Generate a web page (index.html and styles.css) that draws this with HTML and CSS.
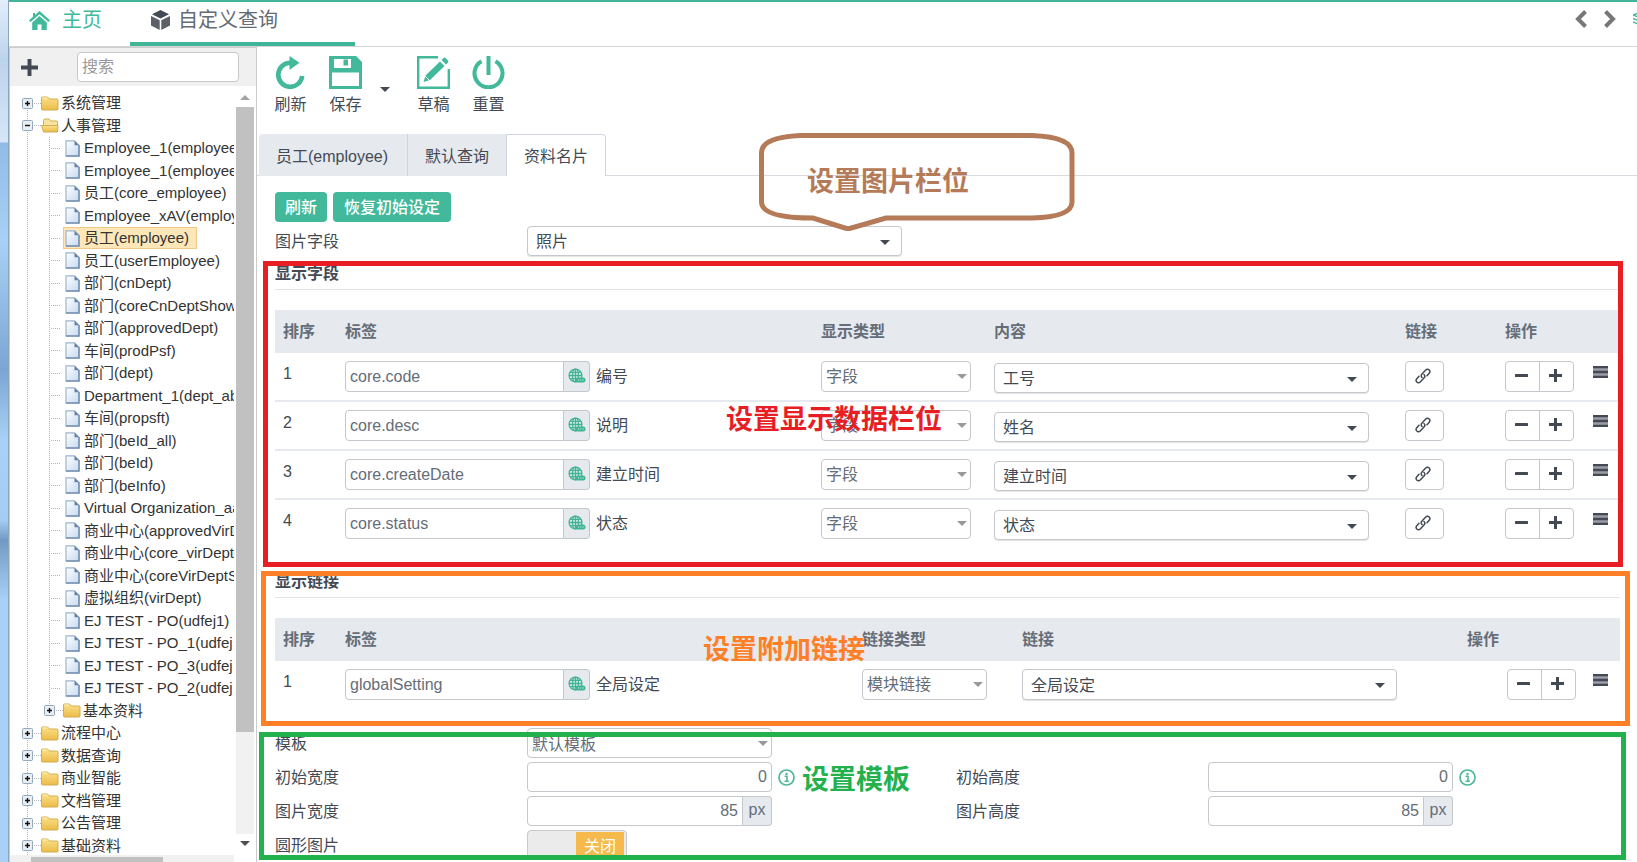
FILE: index.html
```html
<!DOCTYPE html>
<html lang="zh-CN">
<head>
<meta charset="utf-8">
<title>自定义查询</title>
<link rel="stylesheet" href="styles.css">
</head>
<body>
<svg class="sprite" aria-hidden="true">
  <defs>
    <linearGradient id="gold" x1="0" y1="0" x2="0" y2="1"><stop offset="0" stop-color="#fbe18a"/><stop offset="1" stop-color="#ebbb48"/></linearGradient>
    <linearGradient id="sheet" x1="0" y1="0" x2="1" y2="1"><stop offset="0" stop-color="#ffffff"/><stop offset="1" stop-color="#c6d9f0"/></linearGradient>
  </defs>
  <symbol id="plusbox" viewBox="0 0 11 11"><rect x=".5" y=".5" width="10" height="10" rx="1" fill="#e9eef2" stroke="#93a9bb"/><path d="M3 5.5h5M5.500 3v5" stroke="#111" stroke-width="1.400"/></symbol>
  <symbol id="minusbox" viewBox="0 0 11 11"><rect x=".5" y=".5" width="10" height="10" rx="1" fill="#e9eef2" stroke="#93a9bb"/><path d="M3 5.5h5" stroke="#111" stroke-width="1.400"/></symbol>
  <symbol id="folder" viewBox="0 0 18 15"><path d="M.5 13V2Q.5 1 1.500 1H6.500L8.500 3H16Q17 3 17 4V13Q17 14 16 14H1.500Q.5 14 .5 13Z" fill="url(#gold)" stroke="#d3ad52"/><path d="M1.500 2H6.200" stroke="#fff3c0"/></symbol>
  <symbol id="folder-open" viewBox="0 0 18 15"><path d="M2.500 13V2.500Q2.500 1 4 1H8L10 3H15Q16.500 3 16.500 4V13Z" fill="#f6e3a0" stroke="#d3ad52"/><path d="M.5 7.500H17L16.500 14H2.500Z" fill="url(#gold)" stroke="#d3ad52"/></symbol>
  <symbol id="file" viewBox="0 0 15 17"><path d="M1 .8H9.500L14 5.200V16H1Z" fill="url(#sheet)" stroke="#9db4cf" stroke-width="1.200"/><path d="M9.500 .8V5.200H14Z" fill="#6482a6"/><path d="M14 5V16H1" fill="none" stroke="#7490b0" stroke-width="1.500"/></symbol>
  <symbol id="globe" viewBox="0 0 18 16"><g fill="none" stroke="#3fb594" stroke-width="1.300"><circle cx="7.500" cy="7.500" r="6.400"/><ellipse cx="7.500" cy="7.500" rx="3" ry="6.400"/><path d="M7.500 1V14M1 7.500H14M2 4.300H13M2 10.700H10"/></g><rect x="7.500" y="9.500" width="10" height="5" rx="2.500" fill="#3fb594"/><path d="M10 12h1M12.300 12h1M14.600 12h1" stroke="#e6f3f0"/></symbol>
  <symbol id="link" viewBox="0 0 16 16"><g fill="none" stroke="#434a54" stroke-width="1.500" stroke-linecap="round"><path d="M7 9.500C5.800 8.300 6 7 7 6L10.500 2.200C11.700 1 13.300 1.100 14.200 2S15 4.500 14 5.600L12 7.800"/><path d="M9 6.500C10.200 7.700 10 9 9 10L5.500 13.800C4.300 15 2.700 14.900 1.800 14S1 11.500 2 10.400L4 8.200"/></g></symbol>
  <symbol id="minus" viewBox="0 0 13 13"><rect y="5" width="13" height="3" rx=".5" fill="#434a54"/></symbol>
  <symbol id="plus" viewBox="0 0 13 13"><path d="M5 0H8V5H13V8H8V13H5V8H0V5H5Z" fill="#434a54"/></symbol>
  <symbol id="drag" viewBox="0 0 15 12"><path d="M0 0H15V12H0Z" fill="#9a9da6"/><path d="M0 1.200H15M0 6H15M0 10.800H15" stroke="#434a54" stroke-width="2.300"/></symbol>
  <symbol id="info" viewBox="0 0 17 17"><circle cx="8.500" cy="8.500" r="7.500" fill="none" stroke="#4fb79b" stroke-width="1.700"/><circle cx="8.500" cy="4.900" r="1.200" fill="#4fb79b"/><path d="M6.600 7.300H9V12M6.500 12.200H10.800" fill="none" stroke="#4fb79b" stroke-width="1.600"/></symbol>
</svg>

<div class="desktop-edge"></div>
<div class="app">
  <header class="topbar">
    <nav class="pages">
      <a class="page page--home" href="#"><svg width="21" height="19" viewBox="0 0 21 19"><path d="M10.500 0L21 9.300L19.500 11L10.500 3.200L1.500 11L0 9.300L4 5.800V2H6V4Z" fill="#41b99a"/><path d="M10.500 5L17.800 11.500V19H12.500V13.500H8.500V19H3.200V11.500Z" fill="#41b99a"/></svg>主页</a>
      <a class="page page--active" href="#"><svg width="19" height="20" viewBox="0 0 19 20"><path d="M9.500 0L18 4.200L9.500 8.500L1 4.200Z" fill="#434a54"/><path d="M0 6L8.700 10.200V20L0 15.500ZM19 6L10.300 10.200V20L19 15.500Z" fill="#5b6069"/></svg>自定义查询</a>
    </nav>
    <div class="pager">
      <button class="icon-btn" aria-label="向左"><svg width="12" height="18" viewBox="0 0 12 18"><path d="M10.500 1.500L3 9L10.500 16.500" fill="none" stroke="#777" stroke-width="4"/></svg></button>
      <button class="icon-btn" aria-label="向右"><svg width="12" height="18" viewBox="0 0 12 18"><path d="M1.500 1.500L9 9L1.500 16.500" fill="none" stroke="#777" stroke-width="4"/></svg></button>
      <button class="icon-btn icon-btn--stack" aria-label="全部页面"><svg width="16" height="14" viewBox="0 0 16 14"><path d="M0 3L8 0L16 3L8 6ZM0 6.500L8 9.500L16 6.500M0 10L8 13L16 10" fill="none" stroke="#41b99a" stroke-width="1.600"/></svg></button>
    </div>
  </header>

  <div class="body">
    <aside class="sidebar">
      <div class="sidebar__head">
        <button class="icon-btn" aria-label="新增"><svg width="17" height="17"><use href="#plus"/></svg></button>
        <input class="search" type="text" placeholder="搜索" aria-label="搜索">
      </div>
      <div class="sidebar__main">
        <div class="tree-pane">
          <ul class="tree">
            <li><a class="node" href="#"><svg class="exp"><use href="#plusbox"/></svg><i class="dots"></i><svg class="folder"><use href="#folder"/></svg>系统管理</a></li>
            <li><a class="node" href="#"><svg class="exp"><use href="#minusbox"/></svg><i class="dots"></i><svg class="folder"><use href="#folder-open"/></svg>人事管理</a>
              <ul class="branch">
                <li><a class="leaf" href="#"><svg class="file"><use href="#file"/></svg>Employee_1(employee</a></li>
                <li><a class="leaf" href="#"><svg class="file"><use href="#file"/></svg>Employee_1(employee</a></li>
                <li><a class="leaf" href="#"><svg class="file"><use href="#file"/></svg>员工(core_employee)</a></li>
                <li><a class="leaf" href="#"><svg class="file"><use href="#file"/></svg>Employee_xAV(employ</a></li>
                <li><a class="leaf leaf--selected" href="#"><svg class="file"><use href="#file"/></svg>员工(employee)</a></li>
                <li><a class="leaf" href="#"><svg class="file"><use href="#file"/></svg>员工(userEmployee)</a></li>
                <li><a class="leaf" href="#"><svg class="file"><use href="#file"/></svg>部门(cnDept)</a></li>
                <li><a class="leaf" href="#"><svg class="file"><use href="#file"/></svg>部门(coreCnDeptShow</a></li>
                <li><a class="leaf" href="#"><svg class="file"><use href="#file"/></svg>部门(approvedDept)</a></li>
                <li><a class="leaf" href="#"><svg class="file"><use href="#file"/></svg>车间(prodPsf)</a></li>
                <li><a class="leaf" href="#"><svg class="file"><use href="#file"/></svg>部门(dept)</a></li>
                <li><a class="leaf" href="#"><svg class="file"><use href="#file"/></svg>Department_1(dept_ab</a></li>
                <li><a class="leaf" href="#"><svg class="file"><use href="#file"/></svg>车间(propsft)</a></li>
                <li><a class="leaf" href="#"><svg class="file"><use href="#file"/></svg>部门(beId_all)</a></li>
                <li><a class="leaf" href="#"><svg class="file"><use href="#file"/></svg>部门(beId)</a></li>
                <li><a class="leaf" href="#"><svg class="file"><use href="#file"/></svg>部门(beInfo)</a></li>
                <li><a class="leaf" href="#"><svg class="file"><use href="#file"/></svg>Virtual Organization_aa</a></li>
                <li><a class="leaf" href="#"><svg class="file"><use href="#file"/></svg>商业中心(approvedVirD</a></li>
                <li><a class="leaf" href="#"><svg class="file"><use href="#file"/></svg>商业中心(core_virDept</a></li>
                <li><a class="leaf" href="#"><svg class="file"><use href="#file"/></svg>商业中心(coreVirDeptS</a></li>
                <li><a class="leaf" href="#"><svg class="file"><use href="#file"/></svg>虚拟组织(virDept)</a></li>
                <li><a class="leaf" href="#"><svg class="file"><use href="#file"/></svg>EJ TEST - PO(udfej1)</a></li>
                <li><a class="leaf" href="#"><svg class="file"><use href="#file"/></svg>EJ TEST - PO_1(udfej</a></li>
                <li><a class="leaf" href="#"><svg class="file"><use href="#file"/></svg>EJ TEST - PO_3(udfej</a></li>
                <li><a class="leaf" href="#"><svg class="file"><use href="#file"/></svg>EJ TEST - PO_2(udfej</a></li>
                <li class="sub"><a class="node" href="#"><svg class="exp"><use href="#plusbox"/></svg><i class="dots"></i><svg class="folder"><use href="#folder"/></svg>基本资料</a></li>
              </ul>
            </li>
            <li><a class="node" href="#"><svg class="exp"><use href="#plusbox"/></svg><i class="dots"></i><svg class="folder"><use href="#folder"/></svg>流程中心</a></li>
            <li><a class="node" href="#"><svg class="exp"><use href="#plusbox"/></svg><i class="dots"></i><svg class="folder"><use href="#folder"/></svg>数据查询</a></li>
            <li><a class="node" href="#"><svg class="exp"><use href="#plusbox"/></svg><i class="dots"></i><svg class="folder"><use href="#folder"/></svg>商业智能</a></li>
            <li><a class="node" href="#"><svg class="exp"><use href="#plusbox"/></svg><i class="dots"></i><svg class="folder"><use href="#folder"/></svg>文档管理</a></li>
            <li><a class="node" href="#"><svg class="exp"><use href="#plusbox"/></svg><i class="dots"></i><svg class="folder"><use href="#folder"/></svg>公告管理</a></li>
            <li><a class="node" href="#"><svg class="exp"><use href="#plusbox"/></svg><i class="dots"></i><svg class="folder"><use href="#folder"/></svg>基础资料</a></li>
          </ul>
        </div>
        <div class="vscroll"><i class="tri tri--up"></i><i class="vscroll__track"><i class="vscroll__thumb"></i></i><i class="tri tri--down"></i></div>
      </div>
      <div class="hscroll"><i class="hscroll__thumb"></i></div>
    </aside>

    <main class="main">
      <div class="toolbar">
        <button class="tool"><svg width="33" height="33" viewBox="0 0 33 33"><path d="M19 6.800H15.500A12 12 0 1 0 28.200 20" fill="none" stroke="#41b99a" stroke-width="4.600"/><path d="M15.500 0L25.500 6.800L15.500 14Z" fill="#41b99a"/></svg>刷新</button>
        <button class="tool tool--save"><svg width="33" height="33" viewBox="0 0 33 33"><path fill-rule="evenodd" d="M0 0H27L33 6V33H0ZM5 3V12H22V3ZM3 16.500V30H30V16.500Z" fill="#41b99a"/><rect x="14.500" y="3.500" width="4.500" height="6" fill="#41b99a"/></svg>保存</button>
        <button class="tool-caret" aria-label="保存选项"></button>
        <button class="tool"><svg width="33" height="33" viewBox="0 0 33 33"><path d="M21 1.200H1.200V31.800H31.800V13" fill="none" stroke="#41b99a" stroke-width="2.400"/><path d="M6.500 26L8.500 19.500L23 5.500L27.500 10L13 24Z M24.500 4L26.500 2Q27.500 1.200 28.500 2L31 4.500Q31.800 5.500 31 6.500L29 8.500Z" fill="#41b99a"/><path d="M8 20L12.500 24.500" stroke="#fff"/></svg>草稿</button>
        <button class="tool"><svg width="33" height="33" viewBox="0 0 33 33"><path d="M9.500 5.200A14 14 0 1 0 23.500 5.200" fill="none" stroke="#41b99a" stroke-width="4"/><path d="M16.500 0V19" stroke="#41b99a" stroke-width="4"/></svg>重置</button>
      </div>

      <nav class="tabs">
        <a class="tab" href="#">员工(employee)</a>
        <a class="tab" href="#">默认查询</a>
        <a class="tab tab--active" href="#">资料名片</a>
      </nav>

      <div class="panel">
        <div class="actions">
          <button class="btn-primary">刷新</button>
          <button class="btn-primary">恢复初始设定</button>
        </div>
        <div class="field-row">
          <label for="photo">图片字段</label>
          <span class="select select--dark photo"><select id="photo"><option>照片</option></select></span>
          <div class="callout">
            <svg width="316" height="98" viewBox="0 0 316 98"><path d="M42 2.500H273Q313 4 313 20V69Q313 84 273 85H127L89 96L54 85Q2.500 85 2.500 69V20Q2.500 4 42 2.500Z" fill="none" stroke="#b57b58" stroke-width="5"/></svg>
            <span class="note">设置图片栏位</span>
          </div>
        </div>

        <section class="block block--fields">
          <h2>显示字段</h2>
          <table class="grid">
            <colgroup><col class="c-no"><col><col class="c-type"><col class="c-content"><col class="c-link"><col class="c-ops"><col class="c-drag"></colgroup>
            <thead><tr><th>排序</th><th>标签</th><th>显示类型</th><th>内容</th><th>链接</th><th>操作</th><th></th></tr></thead>
            <tbody>
              <tr>
                <td>1</td>
                <td><div class="tag"><span class="group"><input type="text" value="core.code" aria-label="标签"><button class="addon" aria-label="多语言"><svg width="18" height="16"><use href="#globe"/></svg></button></span>编号</div></td>
                <td><span class="select"><select aria-label="显示类型"><option>字段</option></select></span></td>
                <td class="content"><span class="select select--dark"><select aria-label="内容"><option>工号</option></select></span></td>
                <td><button class="btn" aria-label="链接"><svg width="16" height="16"><use href="#link"/></svg></button></td>
                <td><div class="pair"><button aria-label="删除"><svg width="13" height="13"><use href="#minus"/></svg></button><button aria-label="新增"><svg width="13" height="13"><use href="#plus"/></svg></button></div></td>
                <td class="drag"><svg width="15" height="12"><use href="#drag"/></svg></td>
              </tr>
              <tr>
                <td>2</td>
                <td><div class="tag"><span class="group"><input type="text" value="core.desc" aria-label="标签"><button class="addon" aria-label="多语言"><svg width="18" height="16"><use href="#globe"/></svg></button></span>说明</div></td>
                <td><span class="select"><select aria-label="显示类型"><option>字段</option></select></span></td>
                <td class="content"><span class="select select--dark"><select aria-label="内容"><option>姓名</option></select></span></td>
                <td><button class="btn" aria-label="链接"><svg width="16" height="16"><use href="#link"/></svg></button></td>
                <td><div class="pair"><button aria-label="删除"><svg width="13" height="13"><use href="#minus"/></svg></button><button aria-label="新增"><svg width="13" height="13"><use href="#plus"/></svg></button></div></td>
                <td class="drag"><svg width="15" height="12"><use href="#drag"/></svg></td>
              </tr>
              <tr>
                <td>3</td>
                <td><div class="tag"><span class="group"><input type="text" value="core.createDate" aria-label="标签"><button class="addon" aria-label="多语言"><svg width="18" height="16"><use href="#globe"/></svg></button></span>建立时间</div></td>
                <td><span class="select"><select aria-label="显示类型"><option>字段</option></select></span></td>
                <td class="content"><span class="select select--dark"><select aria-label="内容"><option>建立时间</option></select></span></td>
                <td><button class="btn" aria-label="链接"><svg width="16" height="16"><use href="#link"/></svg></button></td>
                <td><div class="pair"><button aria-label="删除"><svg width="13" height="13"><use href="#minus"/></svg></button><button aria-label="新增"><svg width="13" height="13"><use href="#plus"/></svg></button></div></td>
                <td class="drag"><svg width="15" height="12"><use href="#drag"/></svg></td>
              </tr>
              <tr>
                <td>4</td>
                <td><div class="tag"><span class="group"><input type="text" value="core.status" aria-label="标签"><button class="addon" aria-label="多语言"><svg width="18" height="16"><use href="#globe"/></svg></button></span>状态</div></td>
                <td><span class="select"><select aria-label="显示类型"><option>字段</option></select></span></td>
                <td class="content"><span class="select select--dark"><select aria-label="内容"><option>状态</option></select></span></td>
                <td><button class="btn" aria-label="链接"><svg width="16" height="16"><use href="#link"/></svg></button></td>
                <td><div class="pair"><button aria-label="删除"><svg width="13" height="13"><use href="#minus"/></svg></button><button aria-label="新增"><svg width="13" height="13"><use href="#plus"/></svg></button></div></td>
                <td class="drag"><svg width="15" height="12"><use href="#drag"/></svg></td>
              </tr>
            </tbody>
          </table>
          <div class="frame"></div>
          <span class="note">设置显示数据栏位</span>
        </section>

        <section class="block block--links">
          <h2>显示链接</h2>
          <table class="grid">
            <colgroup><col class="c-no"><col><col class="c-type"><col class="c-content"><col class="c-ops"><col class="c-drag"></colgroup>
            <thead><tr><th>排序</th><th>标签</th><th>链接类型</th><th>链接</th><th>操作</th><th></th></tr></thead>
            <tbody>
              <tr>
                <td>1</td>
                <td><div class="tag"><span class="group"><input type="text" value="globalSetting" aria-label="标签"><button class="addon" aria-label="多语言"><svg width="18" height="16"><use href="#globe"/></svg></button></span>全局设定</div></td>
                <td><span class="select"><select aria-label="链接类型"><option>模块链接</option></select></span></td>
                <td><span class="select select--dark"><select aria-label="链接"><option>全局设定</option></select></span></td>
                <td><div class="pair"><button aria-label="删除"><svg width="13" height="13"><use href="#minus"/></svg></button><button aria-label="新增"><svg width="13" height="13"><use href="#plus"/></svg></button></div></td>
                <td class="drag"><svg width="15" height="12"><use href="#drag"/></svg></td>
              </tr>
            </tbody>
          </table>
          <div class="frame"></div>
          <span class="note">设置附加链接</span>
        </section>

        <section class="block block--template">
          <div class="form">
            <label for="tpl">模板</label>
            <div class="control"><span class="select"><select id="tpl"><option>默认模板</option></select></span></div>
            <label class="first" for="w0">初始宽度</label>
            <div class="control"><span class="group"><input id="w0" type="text" value="0"></span><svg width="17" height="17"><use href="#info"/></svg></div>
            <label for="h0">初始高度</label>
            <div class="control"><span class="group"><input id="h0" type="text" value="0"></span><svg width="17" height="17"><use href="#info"/></svg></div>
            <label class="first" for="w1">图片宽度</label>
            <div class="control"><span class="group"><input id="w1" type="text" value="85"><span class="addon">px</span></span></div>
            <label for="h1">图片高度</label>
            <div class="control"><span class="group"><input id="h1" type="text" value="85"><span class="addon">px</span></span></div>
            <label class="first" for="round">圆形图片</label>
            <div class="control"><label class="toggle"><input id="round" type="checkbox"><span class="toggle__off">关闭</span></label></div>
          </div>
          <div class="frame"></div>
          <span class="note">设置模板</span>
        </section>
      </div>
    </main>
  </div>
</div>
</body>
</html>
```
FILE: styles.css
```css
* { box-sizing: border-box; }

body {
  margin: 0;
  height: 100vh;
  display: flex;
  overflow: hidden;
  background: #fff;
  color: #434a54;
  font: 16px/24px "Liberation Sans", "Noto Sans CJK SC", sans-serif;
}

button, input, select { font: inherit; color: inherit; margin: 0; }
button { cursor: pointer; }
a { color: inherit; text-decoration: none; }
ul { list-style: none; margin: 0; padding: 0; }
.sprite { position: absolute; width: 0; height: 0; }

.desktop-edge {
  flex: none;
  width: 9px;
  border-right: 1px solid #8ba3bf;
  background: linear-gradient(#e3eef9 0, #bcd3ec 60px, #d5e6f7 142px, #8fbbe6 143px, #a9d1f5 240px, #7ba6d3 370px, #a9d1f5 440px, #a5cdf2 520px, #7399c2 540px, #a9d1f5 600px, #a9d1f5 100%);
}

.app { flex: 1; min-width: 0; display: flex; flex-direction: column; }

.icon-btn { display: flex; padding: 0; border: 0; background: none; }

/* Top page tabs */
.topbar {
  flex: none;
  display: flex;
  justify-content: space-between;
  height: 47px;
  border-top: 2px solid #41b597;
  border-bottom: 1px solid #d5d5d5;
  overflow: hidden;
}
.pages { display: flex; font-size: 20px; }
.page { display: flex; align-items: center; padding: 0 28px 8px 20px; }
.page--home { gap: 12px; color: #41b99a; }
.page--active { gap: 8px; width: 225px; padding: 0 28px 4px 21px; border-bottom: 4px solid #41b597; color: #656b75; }
.pager { display: flex; align-items: flex-start; gap: 17px; padding-top: 8px; margin-right: -12px; }
.icon-btn--stack { padding-top: 2px; }

.body { flex: 1; min-height: 0; display: flex; }

/* Sidebar */
.sidebar {
  flex: none;
  width: 248px;
  display: flex;
  flex-direction: column;
  border: solid #ccc;
  border-width: 1px 1px 0;
}
.sidebar__head {
  flex: none;
  display: flex;
  align-items: center;
  justify-content: space-between;
  height: 38px;
  padding: 0 17px 0 11px;
  background: #f0f0f0;
}
.search {
  width: 162px;
  height: 30px;
  padding: 0 4px;
  border: 1px solid #c8c8c8;
  border-radius: 4px;
  background: #fff;
}
.search::placeholder { color: #999; opacity: 1; }
.sidebar__main { flex: 1; min-height: 0; display: flex; }
.tree-pane { flex: 1; min-width: 0; overflow: hidden; padding-top: 6px; color: #333; font-size: 15px; white-space: nowrap; }

.tree, .branch {
  background: repeating-linear-gradient(#b5b5b5 0 1px, transparent 1px 2px) no-repeat 17px 12px / 1px 100%;
}
.branch { background-position: 39px 0; background-size: 1px 574px; }
.node, .leaf { display: flex; align-items: center; height: 22px; }
li:nth-child(even) > .node, li:nth-child(even) > .leaf { height: 23px; }
.node { padding-left: 12px; }
.sub .node { padding-left: 34px; }
.exp { width: 11px; height: 11px; }
.dots { width: 8px; height: 1px; background: repeating-linear-gradient(90deg, transparent 0 1px, #b5b5b5 1px 2px); }
.folder { width: 18px; height: 15px; margin-right: 2px; }
.branch > li { display: flex; align-items: center; }
.branch > li:not(.sub)::before {
  content: "";
  flex: none;
  width: 10px;
  height: 1px;
  margin: 0 3px 0 40px;
  background: repeating-linear-gradient(90deg, transparent 0 1px, #b5b5b5 1px 2px);
}
.leaf { padding: 0 7px 0 2px; }
.file { flex: none; width: 15px; height: 17px; margin-right: 4px; }
.branch .leaf--selected { height: 22px; padding-left: 1px; border: 1px solid #f0c98a; background: #fde7b8; }

.vscroll { flex: none; width: 22px; display: flex; flex-direction: column; align-items: center; padding: 9px 1px 9px 0; background: #fff; }
.vscroll__track { flex: 1; width: 18px; margin: 7px 0; background: #f1f1f1; }
.vscroll__thumb { display: block; height: 86%; background: #c1c1c1; }
.tri { border: 5px solid transparent; }
.tri--up { border-top: 0; border-bottom-color: #a3a3a3; }
.tri--down { border-bottom: 0; border-top-color: #505050; }
.hscroll { flex: none; height: 7px; margin-right: 22px; padding: 2px 0 0 21px; background: #f1f1f1; }
.hscroll__thumb { display: block; width: 132px; height: 5px; background: #c1c1c1; }

/* Main area */
.main { flex: 1; min-width: 0; overflow: hidden; }
.toolbar { display: flex; align-items: flex-start; height: 87px; padding: 9px 0 0 17px; }
.tool { display: flex; flex-direction: column; align-items: center; gap: 4px; margin-right: 22px; padding: 0; border: 0; background: none; }
.tool--save { margin-right: 18px; }
.tool-caret { width: 10px; height: 0; margin: 31px 27px 0 0; padding: 0; border: 5px solid transparent; border-bottom: 0; border-top-color: #434a54; background: none; }

.tabs { display: flex; height: 42px; padding-left: 2px; box-shadow: inset 0 -1px #d8dbe0; }
.tab { padding: 11px 17px 7px; border-right: 1px solid #d0d5dc; background: #e6e9ee; line-height: 24px; }
.tab:first-child { padding-right: 19px; border-top-left-radius: 4px; }
.tab--active { border-top: 1px solid #d0d5dc; border-top-right-radius: 4px; padding-top: 10px; background: #fff; }

.panel { padding: 16px 17px 0 18px; }
.actions { display: flex; gap: 6px; }
.btn-primary { height: 30px; padding: 1px 10px 0; border: 0; border-radius: 4px; background: #41b99a; color: #fff; font-weight: 500; }
.btn-primary + .btn-primary { padding: 1px 11px 0; }

.field-row { position: relative; display: flex; align-items: center; height: 30px; margin-top: 4px; }
.field-row > label { width: 252px; padding-top: 2px; }
.photo { width: 375px; }

/* Controls */
.select { position: relative; display: block; height: 31px; color: #656d78; }
.select select {
  display: block;
  width: 100%;
  height: 100%;
  padding: 1px 20px 0 4px;
  appearance: none;
  border: 1px solid #c4c7cb;
  border-radius: 4px;
  background: #fff;
}
.select::after {
  content: "";
  position: absolute;
  top: 13px;
  right: 4px;
  border: 5px solid transparent;
  border-bottom: 0;
  border-top-color: #999;
}
.select--dark { height: 30px; color: #434a54; }
.select--dark select { padding-top: 2px; padding-left: 8px; box-shadow: 0 1px 1px #e4e4e4; }
.select--dark::after { top: 14px; right: 12px; border-top-color: #434a54; }

.group { display: flex; height: 30px; }
.group input {
  flex: 1;
  min-width: 0;
  padding: 0 4px;
  border: 1px solid #c4c7cb;
  border-radius: 4px;
  background: #fff;
  color: #656d78;
}
.group input:not(:last-child) { border-radius: 4px 0 0 4px; }
.addon {
  flex: none;
  display: flex;
  align-items: center;
  justify-content: center;
  width: 26px;
  padding: 0 0 2px;
  border: 1px solid #c4c7cb;
  border-left: 0;
  border-radius: 0 4px 4px 0;
  background: #e6e9ee;
  color: #656d78;
}

/* Sections */
.block { position: relative; }
.block--fields { margin-top: 5px; }
.block--links { margin-top: 22px; }
.block--template { margin-top: 20px; }
.block h2 { height: 29px; margin: 0 0 20px; border-bottom: 1px solid #e2e4e8; font-size: 16px; line-height: 26px; }

.grid { width: 100%; table-layout: fixed; border-collapse: separate; border-spacing: 0; }
.grid th { height: 43px; padding: 0 8px; background: #e6e9ee; color: #656d78; text-align: left; }
.grid td { height: 47px; padding: 8px 8px 0; vertical-align: top; }
.grid td:first-child { padding-top: 9px; }
.grid tbody tr:not(:last-child) td { height: 49px; border-bottom: 2px solid #e6e9ee; }
.grid .content { padding-top: 10px; }
.grid .content .select, .block--links .select--dark { width: 375px; max-width: 100%; }
.block--links .select--dark { height: 31px; }
.grid .drag { padding: 13px 0 0 11px; }
.drag svg { display: block; }
.c-no { width: 62px; }
.c-type { width: 173px; }
.c-content { width: 411px; }
.c-link { width: 100px; }
.c-ops { width: 85px; }
.c-drag { width: 38px; }
.block--fields td:nth-child(3) .select { width: 150px; }
.block--links .c-type { width: 160px; }
.block--links .c-content { width: 445px; }
.block--links .c-ops { width: 123px; }
.block--links td:nth-child(3) .select { width: 125px; }
.block--links td:nth-child(5) { padding-right: 6px; }

.tag { display: flex; align-items: center; gap: 6px; height: 31px; line-height: 26px; }
.tag .group { width: 245px; height: 31px; line-height: 24px; }
.btn { display: flex; align-items: center; width: 39px; height: 31px; padding: 0 9px 2px; border: 1px solid #c4c7cb; border-radius: 4px; background: #fff; }
.pair { display: flex; width: 69px; height: 31px; margin-left: auto; border: 1px solid #c4c7cb; border-radius: 4px; }
.pair button { flex: 1; display: flex; align-items: center; justify-content: center; padding: 0 3px 2px 0; border: 0; background: none; }
.pair button + button { border-left: 1px solid #c4c7cb; }

/* Template form */
.form { display: grid; grid-template-columns: 252px 429px 252px 1fr; grid-auto-rows: 30px; row-gap: 4px; align-items: center; }
.form > label { padding-top: 2px; }
.form .first { grid-column: 1; }
.control { display: flex; align-items: center; gap: 6px; }
.control .group, .control .select { width: 245px; height: 30px; }
.control .select select { padding-top: 3px; }
.control input { text-align: right; }
.control .addon { width: 29px; }
.toggle { display: flex; width: 100px; height: 30px; padding: 1px 2px 1px 48px; border: 1px solid #c9c9c9; border-radius: 4px; background: #ebebeb; }
.toggle input { position: absolute; opacity: 0; }
.toggle__off { flex: 1; background: #f5b94c; color: #fff; line-height: 30px; text-align: center; }

/* Annotations drawn over the form */
.frame { position: absolute; border: 5px solid; pointer-events: none; }
.note { position: absolute; font-size: 27px; line-height: 36px; font-weight: 700; white-space: nowrap; pointer-events: none; }
.block--fields .frame { inset: 0 -3px -20px -12px; border-color: #e81e25; }
.block--fields .note { left: 451px; top: 141px; color: #e81e25; }
.block--links .frame { inset: 2px -10px -18px -14px; border-color: #ff7f27; }
.block--links .note { left: 428px; top: 63px; color: #ff7f27; }
.block--template .frame { inset: 4px -6px 0 -16px; border-color: #22b14c; }
.block--template .note { left: 527px; top: 34px; color: #22b14c; }
.callout { position: absolute; left: 484px; bottom: 25px; width: 316px; height: 98px; pointer-events: none; }
.callout .note { left: 48px; top: 31px; color: #b57b58; }
```
